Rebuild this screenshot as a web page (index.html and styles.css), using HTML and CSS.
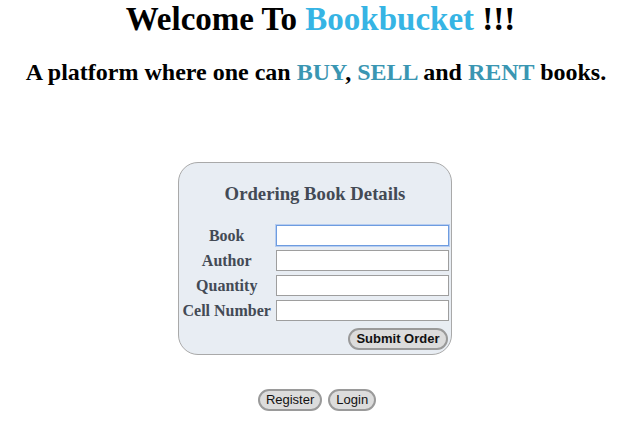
FILE: index.html
```html
<!DOCTYPE html>
<html>
<head>
<meta charset="utf-8">
<link rel="stylesheet" href="styles.css">
</head>
<body>
<h1 class="title">Welcome To <span class="brand">Bookbucket</span> !!!</h1>
<h2 class="subtitle">A platform where one can <span class="hl">BUY</span>, <span class="hl">SELL</span> and <span class="hl">RENT</span> books.</h2>
<div class="card">
  <h3 class="card-title">Ordering Book Details</h3>
  <table class="form">
    <tr><td class="lbl">Book</td><td><input class="inp focus" type="text"></td></tr>
    <tr><td class="lbl">Author</td><td><input class="inp" type="text"></td></tr>
    <tr><td class="lbl">Quantity</td><td><input class="inp" type="text"></td></tr>
    <tr><td class="lbl">Cell Number</td><td><input class="inp" type="text"></td></tr>
  </table>
  <div class="submit-row"><button class="btn">Submit Order</button></div>
</div>
<div class="links">
  <button class="btn small">Register</button>
  <button class="btn small">Login</button>
</div>
</body>
</html>
```
FILE: styles.css
```css
body {
  margin: 0;
  padding: 0 10px 0 20px;
  font-family: "Liberation Serif", "Times New Roman", serif;
}
.title {
  margin: 0;
  padding: 1px 0 0 12px;
  text-align: center;
  font-size: 33px;
  font-weight: bold;
}
.brand { color: #36b4e4; }
.subtitle {
  margin: 21px 0 0;
  padding-left: 3px;
  text-align: center;
  font-size: 24px;
  font-weight: bold;
}
.hl { color: #3a96b2; }
.card {
  width: 274px;
  margin: 76px auto 0;
  background: #e8edf3;
  border: 1px solid #a9a9a9;
  border-radius: 20px;
  padding: 0 3px 4px 4px;
  box-sizing: border-box;
  color: #434a55;
}
.card-title {
  margin: 20px 0 20px;
  text-align: center;
  font-size: 18.72px;
  font-weight: bold;
}
.form {
  border-collapse: separate;
  border-spacing: 0 4px;
  margin: -4px 0 0;
}
.lbl {
  text-align: center;
  font-weight: bold;
  font-size: 16px;
  white-space: nowrap;
}
.form td { padding: 0; }
.form td.lbl { padding-right: 5px; }
.inp {
  display: block;
  width: 173px;
  height: 21px;
  box-sizing: border-box;
  border: 1px solid #9e9e9e;
  background: #fff;
  margin: 0;
  font-size: 13px;
}
.inp.focus {
  border: 1px solid #6d9ce0;
  box-shadow: 0 0 0 1px #b7cdf0;
}
.submit-row {
  display: flex;
  justify-content: flex-end;
  margin-top: 3px;
}
.btn {
  font-family: "Liberation Sans", Arial, sans-serif;
  font-size: 13px;
  font-weight: bold;
  color: #111;
  background: #dcdcdc;
  border: 2px solid #9a9a9a;
  border-radius: 12px;
  padding: 1px 6px;
  height: 22px;
  line-height: 16px;
}
.links {
  display: flex;
  justify-content: center;
  gap: 6px;
  margin-top: 34px;
  padding-left: 5px;
}
.btn.small {
  font-weight: normal;
  font-size: 13px;
}
```
